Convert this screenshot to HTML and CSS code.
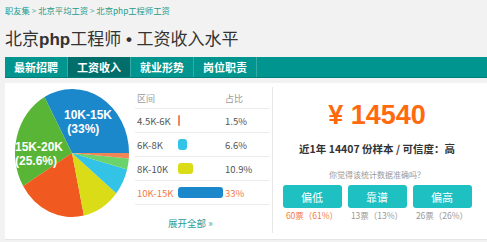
FILE: index.html
```html
<!doctype html>
<html lang="zh-CN">
  <head>
    <meta charset="UTF-8" />
    <title>北京php工程师工资收入水平</title>
    <link rel="stylesheet" href="styles.css">
  </head>
  <body>
    <div class="crumbs">
      <a href="#">职友集</a> &gt; <a href="#">北京平均工资</a> &gt;
      <a href="#">北京php工程师工资</a>
    </div>

    <h1>北京<b>php</b>工程师<span class="dot"> • </span>工资收入水平</h1>

    <ul class="tabs">
      <li>最新招聘</li>
      <li class="active">工资收入</li>
      <li>就业形势</li>
      <li>岗位职责</li>
    </ul>

    <div class="panel">
      <div class="chart">
        <svg width="130" height="150" viewBox="0 0 130 150">
          <path fill="#1b88cc" d="M67,70 L124,70 A57,64 0 0,0 39.4,14 Z" />
          <path fill="#58b535" d="M67,70 L39.4,14 A57,64 0 0,0 18.1,103 Z" />
          <path fill="#f0591f" d="M67,70 L18.1,103 A57,64 0 0,0 78.9,132.6 Z" />
          <path fill="#dadc17" d="M67,70 L78.9,132.6 A57,64 0 0,0 111.3,110.3 Z" />
          <path fill="#32c3e6" d="M67,70 L111.3,110.3 A57,64 0 0,0 122.1,86.6 Z" />
          <path fill="#6bd36b" d="M67,70 L122.1,86.6 A57,64 0 0,0 123.8,75.6 Z" />
          <path fill="#f08657" d="M67,70 L123.8,75.6 A57,64 0 0,0 124,70 Z" />
        </svg>
        <div class="pie-label label-blue">10K-15K<br>&nbsp;(33%)</div>
        <div class="pie-label label-green">15K-20K<br>(25.6%)</div>
      </div>

      <div class="dist">
        <table>
          <tr class="head">
            <td>区间</td>
            <td></td>
            <td>占比</td>
          </tr>
          <tr>
            <td>4.5K-6K</td>
            <td><span class="bar bar-orange" style="width: 2px"></span></td>
            <td>1.5%</td>
          </tr>
          <tr>
            <td>6K-8K</td>
            <td><span class="bar bar-cyan" style="width: 9px"></span></td>
            <td>6.6%</td>
          </tr>
          <tr>
            <td>8K-10K</td>
            <td><span class="bar bar-yellow" style="width: 15px"></span></td>
            <td>10.9%</td>
          </tr>
          <tr class="current">
            <td>10K-15K</td>
            <td><span class="bar bar-blue" style="width: 45px"></span></td>
            <td>33%</td>
          </tr>
        </table>
        <a class="more" href="#">展开全部 »</a>
      </div>

      <div class="avg">
        <div class="price">¥ 14540</div>
        <div class="summary">近1年 14407 份样本 / 可信度：高</div>
        <div class="question">你觉得该统计数据准确吗？</div>
        <div class="votes">
          <div class="vote">
            <button>偏低</button>
            <span class="count hot">60票（61%）</span>
          </div>
          <div class="vote">
            <button>靠谱</button>
            <span class="count">13票（13%）</span>
          </div>
          <div class="vote">
            <button>偏高</button>
            <span class="count">26票（26%）</span>
          </div>
        </div>
      </div>
    </div>
  </body>
</html>
```

FILE: styles.css
```css
body {
  margin: 0;
  padding-left: 5px;
  background: #f2f2f2;
  font-family: "Noto Sans CJK SC", "Liberation Sans", sans-serif;
  color: #333;
  overflow: hidden;
}

a {
  text-decoration: none;
}

.crumbs {
  height: 20px;
  line-height: 20px;
  font-size: 8.3px;
  color: #6cbcb2;
}

.crumbs a {
  color: #249a8c;
}

h1 {
  margin: 6px 0 0;
  height: 24px;
  line-height: 24px;
  font-size: 17px;
  font-weight: normal;
  color: #333;
}

h1 b {
  font-family: "Liberation Sans", sans-serif;
  font-weight: bold;
}

h1 .dot {
  font-family: "Liberation Sans", sans-serif;
  font-weight: bold;
}

.tabs {
  display: flex;
  margin: 7px 0 0;
  padding: 0;
  list-style: none;
  height: 20px;
  background: #00958f;
  border-bottom: 1px solid #007f7a;
}

.tabs li {
  width: 62px;
  line-height: 20px;
  text-align: center;
  font-size: 11px;
  font-weight: bold;
  color: #fff;
  border-right: 1px solid #36aaa5;
}

.tabs li.active {
  background: #006f6b;
}

.panel {
  display: flex;
  margin-top: 5px;
  height: 156px;
  background: #fff;
  border-bottom: 1px solid #e4e4e4;
}

.chart {
  position: relative;
  width: 130px;
}

.chart svg {
  display: block;
}

.pie-label {
  position: absolute;
  font-family: "Liberation Sans", sans-serif;
  font-size: 12px;
  line-height: 13.5px;
  font-weight: bold;
  color: #fff;
  white-space: nowrap;
}

.label-blue {
  left: 59px;
  top: 26px;
}

.label-green {
  left: 10px;
  top: 58px;
}

.dist {
  width: 137px;
  padding-top: 6px;
}

.dist table {
  width: 135px;
  border-collapse: collapse;
  font-size: 9.5px;
  color: #555;
}

.dist td {
  height: 23px;
  padding: 0 0 0 2px;
  border-bottom: 1px solid #ececec;
}

.dist td:nth-child(1) {
  width: 39px;
}

.dist td:nth-child(2) {
  width: 45px;
}

.dist tr.head td {
  height: 19px;
  font-size: 9px;
  color: #999;
}

.dist tr.current td {
  color: #f27a45;
}

.bar {
  display: block;
  height: 11px;
  border-radius: 3px;
}

.bar-orange {
  background: #f08657;
  border-radius: 1px;
}

.bar-cyan {
  background: #32c3e6;
}

.bar-yellow {
  background: #dadc17;
}

.bar-blue {
  background: #1b88cc;
}

.more {
  display: block;
  margin-top: 11px;
  padding-left: 33px;
  font-size: 9.5px;
  color: #2a9d9a;
}

.avg {
  flex: 1;
  margin: 4px 0 6px;
  padding: 12px 6px 0 0;
  border-left: 1px solid #e8e8e8;
  text-align: center;
}

.price {
  height: 32px;
  line-height: 32px;
  font-family: "Liberation Sans", sans-serif;
  font-size: 27px;
  font-weight: bold;
  color: #ff6a0d;
}

.summary {
  margin-top: 10px;
  line-height: 16px;
  font-size: 10.5px;
  font-weight: bold;
  color: #333;
}

.question {
  margin-top: 12px;
  line-height: 12px;
  font-size: 8px;
  color: #999;
}

.votes {
  display: flex;
  justify-content: center;
  gap: 6px;
  margin-top: 4px;
}

.vote {
  width: 59px;
}

.vote button {
  display: block;
  width: 59px;
  height: 23px;
  padding: 0;
  border: none;
  border-radius: 3px;
  background: #1fc0c1;
  color: #fff;
  font-family: inherit;
  font-size: 11px;
}

.count {
  display: block;
  margin-top: 1px;
  line-height: 12px;
  font-size: 8.5px;
  color: #999;
}

.count.hot {
  color: #f27a45;
}
```
